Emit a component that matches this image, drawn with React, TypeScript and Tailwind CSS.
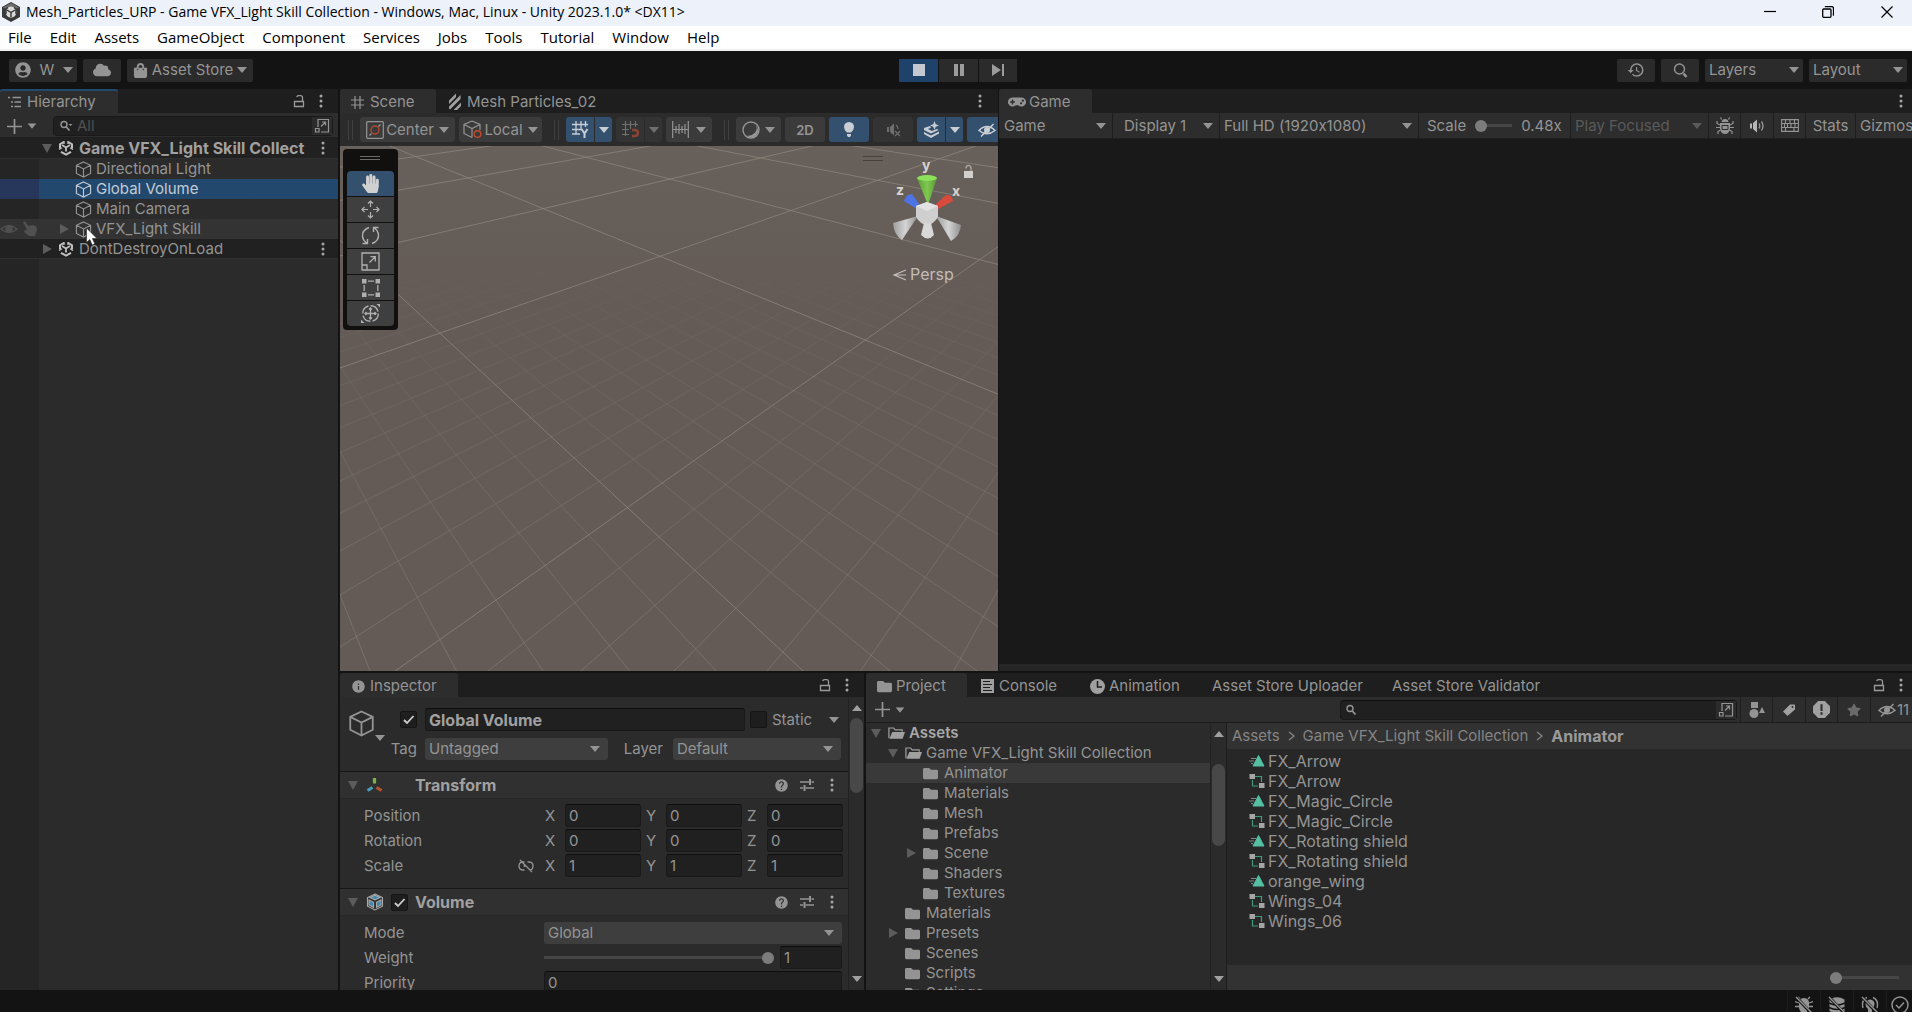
import React from 'react';
import { FaHandPaper, FaCloud, FaGamepad, FaFolder, FaUserCircle, FaStar, FaShoppingBag } from 'react-icons/fa';
import { MdHistory, MdHelp, MdInfo } from 'react-icons/md';

type IconProps = { className?: string };

/* ---------- icons ---------- */

const Svg: React.FC<{ size?: string; box?: string; children: React.ReactNode }> = ({ size = 'size-4', box = '0 0 16 16', children }) => (
  <svg viewBox={box} className={`${size} shrink-0`} fill="none" stroke="currentColor" strokeWidth="1.4" aria-hidden="true">
    {children}
  </svg>
);

const Caret: React.FC<IconProps> = ({ className = '' }) => (
  <svg viewBox="0 0 10 6" className={`w-[10px] h-[6px] shrink-0 fill-current ${className}`} aria-hidden="true">
    <path d="M0 0h10L5 6z" />
  </svg>
);

const Fold: React.FC<{ open?: boolean }> = ({ open }) => (
  <svg viewBox="0 0 12 12" className="size-3 shrink-0 fill-[#5c5c5c]" aria-hidden="true">
    <path d={open ? 'M1 2h10L6 11z' : 'M2 1v10l9-5z'} />
  </svg>
);

const Kebab: React.FC<IconProps> = ({ className = '' }) => (
  <svg viewBox="0 0 4 14" className={`w-1 h-[14px] shrink-0 fill-[#a5a5a5] ${className}`} aria-hidden="true">
    <circle cx="2" cy="2" r="1.5" />
    <circle cx="2" cy="7" r="1.5" />
    <circle cx="2" cy="12" r="1.5" />
  </svg>
);

const Lock = () => (
  <svg viewBox="0 0 12 14" className="w-3 h-[14px] shrink-0" fill="none" stroke="#9a9a9a" strokeWidth="1.3" aria-hidden="true">
    <path d="M1.5 7.5h9v5h-9zM9.5 7V3.5Q9.5 1.6 7.5 1.6H5.5Q4 1.6 3.8 3.2" />
  </svg>
);

const Cube: React.FC<{ size?: string }> = ({ size = 'size-[17px]' }) => (
  <Svg size={size} box="0 0 18 18">
    <path strokeWidth="1.2" d="M9 1l7.5 3.6v8.6L9 17l-7.5-3.8V4.6zM1.5 4.6L9 8.4l7.5-3.8M9 8.4V17" />
  </Svg>
);

const UnityMark = () => (
  <svg viewBox="0 0 16 16" className="size-4 shrink-0" fill="none" stroke="#c0c0c0" strokeWidth="2" aria-hidden="true">
    <path d="M6 1.8L2 4.2v4.3M10 1.8l4 2.4v4.3M3 11.8l5 2.9 5-2.9" />
    <path d="M4 5l4 2.4L12 5M8 7.4v4.2" strokeWidth="1.8" />
    <path d="M6 1v3M10 1v3M1 9.5l3-1.7M15 9.5l-3-1.7" strokeWidth="1.3" />
  </svg>
);

const HierarchyIcon = () => (
  <Svg size="size-[14px]" box="0 0 14 14">
    <path d="M0 2.5h2M4.5 2.5H13M3 7h2M6.5 7H13M3 11.5h2M6.5 11.5H13" />
  </Svg>
);

const GridIcon = () => (
  <Svg size="size-[13px]" box="0 0 13 13">
    <path strokeWidth="1.2" d="M4 0v13M9 0v13M0 4h13M0 9h13" />
  </Svg>
);

const ShaderIcon = () => (
  <svg viewBox="0 0 14 18" className="w-[14px] h-[18px] fill-[#a0a0a0]" aria-hidden="true">
    <path d="M1 7.500L8 .500v3.500L1 11zM1 13.500L12.500 2v4L2 16.500 1 15.500zM5.500 17L13 9.500v3.500l-4 4z" />
  </svg>
);

const OpenFolder = () => (
  <svg viewBox="0 0 18 14" className="w-[17px] h-[14px]" aria-hidden="true">
    <path d="M1 12.500V1.700h5l1.500 2h7.500v2" fill="none" stroke="#a0a0a0" strokeWidth="1.300" />
    <path d="M4.500 6H18l-2.500 7H1.500z" fill="#a0a0a0" />
  </svg>
);

const PopOut: React.FC<{ size?: string }> = ({ size = 'size-4' }) => (
  <Svg size={size}>
    <path strokeWidth="1.2" d="M4 9V1.500h10.500V14H7M1.500 10.500H5V14H1.500zM7 8.500l4.500-4.500M8 4h3.500v3.500" />
  </Svg>
);

const ScaleIcon = () => (
  <Svg size="size-[19px]" box="0 0 19 19">
    <path strokeWidth="1.3" d="M1 1h17v17H1zM1 13h5v5M8.500 10.500L14 5M9.500 4.700H14.300V9.500" />
  </Svg>
);

const SearchIcon: React.FC<{ caret?: boolean }> = ({ caret }) => (
  <Svg size="size-[14px]" box="0 0 14 14">
    <circle cx="5" cy="5.500" r="3" />
    <path strokeWidth="1.800" d="M7.300 8l3.200 3.500" />
    {caret && <path d="M9.500 5h4l-2 2z" fill="currentColor" stroke="none" />}
  </Svg>
);

const Plus = () => (
  <Svg size="size-[17px]" box="0 0 17 17">
    <path strokeWidth="1.700" d="M8.500 1v15M1 8.500h15" />
  </Svg>
);

const HiddenEye = () => (
  <Svg size="size-[18px]" box="0 0 18 18">
    <path strokeWidth="1.500" d="M1 9.500Q9 1.500 17 9.500Q9 16 1 9.500zM3 15.500L15.500 3" />
    <circle cx="9" cy="9" r="3" fill="currentColor" stroke="none" />
  </Svg>
);

const Sliders = () => (
  <Svg size="size-[14px]" box="0 0 14 14">
    <path strokeWidth="1.300" d="M0 4h9M11.500 4H14M0 10h3M5.500 10H14" />
    <path strokeWidth="2" d="M10 1v6M4.500 7v6" />
  </Svg>
);

const SlashMark = () => <path d="M2 2l15 16" stroke="#121212" strokeWidth="3" />;

/* ---------- small building blocks ---------- */

const Tab: React.FC<{ icon?: React.ReactNode; label: string; active?: boolean; focused?: boolean; className: string }> = ({ icon, label, active, focused, className }) => (
  <button
    role="tab"
    aria-selected={!!active}
    className={`h-6 pt-[2px] flex items-center shrink-0 whitespace-nowrap rounded-t-[3px] ${active ? 'bg-[#2d2d2d]' : ''} ${focused ? 'shadow-[inset_0_2px_#24496f] rounded-none' : ''} ${className}`}
  >
    {icon}
    {label}
  </button>
);

const Dropdown: React.FC<{ label: string; value: string; className: string; caretClass?: string }> = ({ label, value, className, caretClass = 'right-2' }) => (
  <div className={`relative flex items-center ${className}`}>
    <select aria-label={label} className="appearance-none size-full bg-transparent pr-5 outline-none" defaultValue={value}>
      <option>{value}</option>
    </select>
    <Caret className={`absolute pointer-events-none ${caretClass}`} />
  </div>
);

const Check: React.FC<{ label: string; checked?: boolean }> = ({ label, checked }) => (
  <span className="relative flex size-[17px] shrink-0">
    <input type="checkbox" id={label} aria-label={label} defaultChecked={checked} className="peer appearance-none size-full rounded-[2px] bg-[#1e1e1e] border border-[#151515]" />
    <svg viewBox="0 0 17 17" className="absolute inset-0 size-full hidden peer-checked:block pointer-events-none" fill="none" stroke="#d0d0d0" strokeWidth="1.800" aria-hidden="true">
      <path d="M4 9l3 3 6.500-7" />
    </svg>
  </span>
);

const Field: React.FC<{ label: string; value: string; className: string }> = ({ label, value, className }) => (
  <input aria-label={label} defaultValue={value} className={`min-w-0 rounded-[3px] bg-[#202020] border border-[#191919] border-t-[#0e0e0e] outline-none ${className}`} />
);

const Slider: React.FC<{ label: string; value: number; className: string }> = ({ label, value, className }) => (
  <input
    type="range"
    aria-label={label}
    defaultValue={value}
    className={`appearance-none h-[3px] bg-[#464646] [&::-webkit-slider-thumb]:appearance-none [&::-webkit-slider-thumb]:size-3 [&::-webkit-slider-thumb]:rounded-full [&::-webkit-slider-thumb]:bg-[#7c7c7c] ${className}`}
  />
);

const ScrollBar: React.FC<{ thumb: string }> = ({ thumb }) => (
  <div className="w-4 shrink-0 flex flex-col items-center justify-between py-2 border-l border-[#222222] text-[#a0a0a0]">
    <Caret className="rotate-180" />
    <div className="flex-1 w-[13px] flex flex-col">
      <div className={`rounded-full bg-[#484848] ${thumb}`} />
    </div>
    <Caret />
  </div>
);

/* ---------- window chrome ---------- */

const menus = ['File', 'Edit', 'Assets', 'GameObject', 'Component', 'Services', 'Jobs', 'Tools', 'Tutorial', 'Window', 'Help'];

const TitleBar = () => (
  <header className="font-['Open_Sans',sans-serif] text-[15px] text-black shrink-0">
    <div className="h-[26px] bg-[#edf1fa] flex items-center pl-[2px] pb-[3px]">
      <svg viewBox="0 0 18 20" className="w-[18px] h-5 mr-[6px]" aria-hidden="true">
        <path d="M9 0l9 5v10l-9 5-9-5V5z" fill="#3a3a3a" />
        <path d="M9 1l8 4.500L9 9 1 5.500z" fill="#6d6d6d" />
        <circle cx="9" cy="10" r="5.500" fill="#d9d9d9" />
        <path d="M5 8l4 2.500L13 8M9 10.500V15M6 5.500l-2 1.500v5M12 5.500l2 1.500v5" fill="none" stroke="#333" strokeWidth="1.400" />
      </svg>
      <h1 className="flex-1 truncate text-[14px]">Mesh_Particles_URP - Game VFX_Light Skill Collection - Windows, Mac, Linux - Unity 2023.1.0* &lt;DX11&gt;</h1>
      <div className="flex">
        <button aria-label="Minimize" className="w-12 h-[23px] flex items-center justify-center">
          <Svg size="size-3" box="0 0 12 12"><path strokeWidth="1.200" d="M0 5.500h12" /></Svg>
        </button>
        <button aria-label="Restore" className="w-[68px] h-[23px] flex items-center justify-center">
          <Svg size="size-3" box="0 0 12 12"><path strokeWidth="1.300" d="M.7 4q0-1 1-1h6.300q1 0 1 1v6.300q0 1-1 1H1.700q-1 0-1-1zM3 1q.5-.4 1-.4h5.500q2 0 2 2V8.500q0 .5-.5 1" /></Svg>
        </button>
        <button aria-label="Close" className="w-[50px] h-[23px] flex items-center justify-center">
          <Svg size="size-3" box="0 0 12 12"><path strokeWidth="1.200" d="M.5.5l11 11M11.500.5l-11 11" /></Svg>
        </button>
      </div>
    </div>
    <nav className="h-[25px] bg-white border-b-2 border-[#f0f0f0] flex items-center pl-2 pb-[2px] gap-[18px]">
      {menus.map((menu) => (
        <button key={menu}>{menu}</button>
      ))}
    </nav>
  </header>
);

const MainToolbar = () => (
  <div className="h-[38px] shrink-0 flex items-center pl-[9px] pr-[5px] [&_button]:h-[23px] [&_button]:bg-[#2b2b2b] [&_button]:flex [&_button]:items-center">
    <div className="flex-1 flex gap-[6px]">
      <button className="w-[68px] justify-between pl-[6px] pr-1 rounded-[2px]"><FaUserCircle size={16} />W<Caret /></button>
      <button aria-label="Cloud" className="w-[38px] justify-center rounded-[2px]"><FaCloud size={18} /></button>
      <button className="w-[126px] justify-between pl-[6px] pr-[6px] rounded-[2px]"><FaShoppingBag size={15} />Asset Store<Caret /></button>
    </div>
    <div className="flex gap-px">
      <button aria-label="Stop" className="w-[39px] justify-center !bg-[#1f426a]">
        <span className="size-3 bg-[#c4c8d0]" />
      </button>
      <button aria-label="Pause" className="w-[39px] justify-center gap-[2px]">
        <span className="w-1 h-3 bg-[#9c9c9c]" /><span className="w-1 h-3 bg-[#9c9c9c]" />
      </button>
      <button aria-label="Step" className="w-[38px] justify-center">
        <svg viewBox="0 0 12 12" className="size-3 fill-[#9c9c9c]" aria-hidden="true"><path d="M0 0l9 6-9 6zM10 0h2v12h-2z" /></svg>
      </button>
    </div>
    <div className="flex-1 flex justify-end gap-[6px]">
      <button aria-label="Undo history" className="w-[38px] justify-center rounded-[2px]"><MdHistory size={18} /></button>
      <button aria-label="Search" className="w-[38px] justify-center rounded-[2px]">
        <Svg size="size-[15px]" box="0 0 15 15"><circle cx="6.500" cy="6" r="5" /><path strokeWidth="2.600" d="M10.500 10.500l3 3.500" /></Svg>
      </button>
      <Dropdown label="Layers" value="Layers" className="w-[98px] h-[23px] bg-[#2b2b2b] rounded-[2px] pl-1" caretClass="right-1" />
      <Dropdown label="Layout" value="Layout" className="w-[98px] h-[23px] bg-[#2b2b2b] rounded-[2px] pl-1" caretClass="right-1" />
    </div>
  </div>
);

/* ---------- hierarchy ---------- */

const objects = [
  { name: 'Directional Light' },
  { name: 'Global Volume', selected: true },
  { name: 'Main Camera' },
  { name: 'VFX_Light Skill', hovered: true },
];

const Hierarchy = () => (
  <section className="relative w-[338px] shrink-0 flex flex-col bg-[#2b2b2b]">
    <div className="h-6 shrink-0 flex items-center bg-[#1e1e1e]" role="tablist">
      <Tab active focused icon={<HierarchyIcon />} label="Hierarchy" className="w-[118px] pl-2 gap-[5px]" />
      <div className="flex-1 flex justify-end items-center gap-[14px] pr-[15px]"><Lock /><Kebab /></div>
    </div>
    <div className="h-[25px] shrink-0 flex items-center pt-[2px] pl-[6px] pr-[5px] bg-[#2d2d2d] border-b border-[#1e1e1e]">
      <button aria-label="Create" className="flex items-center gap-1 w-[47px] shrink-0"><Plus /><Caret className="scale-90" /></button>
      <div className="flex-1 min-w-0 h-5 flex items-center rounded-[4px] border border-[#191919] bg-[#202020] pl-[5px]">
        <SearchIcon caret />
        <input aria-label="Search hierarchy" placeholder="All" className="flex-1 min-w-0 pl-1 bg-transparent outline-none placeholder:text-[#505050]" />
        <button aria-label="Open in search" className="w-5 h-full shrink-0 flex items-center justify-center bg-[#2b2b2b]"><PopOut /></button>
      </div>
    </div>
    <div className="flex-1 bg-linear-to-r from-[#252525] from-[39px] to-[#2b2b2b] to-[39px]">
      <div className="h-[21px] flex items-center bg-[#212121] pl-[41px] pr-[13px] border-b border-[#2f2f2f] font-bold text-base text-[#a0a0a0]">
        <Fold open />
        <span className="ml-[5px] mr-[5px]"><UnityMark /></span>
        <span className="flex-1 whitespace-nowrap">Game VFX_Light Skill Collect</span>
        <Kebab />
      </div>
      <ul>
        {objects.map((o) => (
          <li key={o.name} className={`h-5 flex items-center ${o.selected ? 'bg-linear-to-r from-[#27375c] from-[39px] to-[#22486d] to-[39px] text-[#c2ccd6]' : ''} ${o.hovered ? 'bg-[#333333]' : ''}`}>
            <span className="w-[58px] flex items-center gap-1 text-[#505050]">
              {o.hovered && (
                <>
                  <Svg size="size-[18px]" box="0 0 18 18">
                    <path d="M1 9Q9 2 17 9Q9 16 1 9z" />
                    <circle cx="9" cy="9" r="3" fill="currentColor" />
                  </Svg>
                  <svg viewBox="0 0 16 16" className="size-4 fill-current" aria-hidden="true">
                    <path d="M1 1l2-.5 4 5 1-1.500 2 .5 1.500-.500 1 1h1.500l1 3-1 4-1 3H7l-5-4 .500-1.500L5 9z" />
                  </svg>
                </>
              )}
            </span>
            <span className="w-[17px] shrink-0">{o.hovered && <Fold />}</span>
            <Cube />
            <span className="ml-1">{o.name}</span>
          </li>
        ))}
      </ul>
      <div className="h-5 flex items-center bg-[#212121] pl-[41px] pr-[13px] border-b border-[#2f2f2f]">
        <Fold />
        <span className="ml-[5px] mr-[5px]"><UnityMark /></span>
        <span className="flex-1">DontDestroyOnLoad</span>
        <Kebab />
      </div>
    </div>
    <svg viewBox="0 0 12 20" className="absolute left-[86px] top-[138px] w-3 h-5" aria-hidden="true">
      <path d="M.5 1v14.500l3.300-3 2.400 5.500 2.600-1.200-2.400-5.300h4.600z" fill="#fff" stroke="#222" strokeWidth=".6" />
    </svg>
  </section>
);

/* ---------- scene ---------- */

// ground plane -> screen, one unit is a major grid cell
const depth = (u: number, v: number) => 1 + 0.5428 * u + 0.5867 * v;
const project = (u: number, v: number) => {
  const w = depth(u, v);
  return [(523.1 * u - 129 * v + 287.35) / w, (-62.2 * u - 64.6 * v + 361.5) / w].map((n) => n.toFixed(1)).join(' ');
};

const NEAR = 0.35;
const FAR = 12;

const gridPath = (step: number, count: number, skip?: number) => {
  const parts: string[] = [];
  for (let i = -count; i <= count; i++) {
    if (skip && i % skip === 0) continue;
    const k = i * step;
    const v0 = (NEAR - 1 - 0.5428 * k) / 0.5867;
    const u0 = (NEAR - 1 - 0.5867 * k) / 0.5428;
    parts.push(`M${project(k, v0)}L${project(k, v0 + FAR)}`);
    parts.push(`M${project(u0, k)}L${project(u0 + FAR, k)}`);
  }
  return parts.join('');
};

const SceneGrid = () => (
  <svg viewBox="0 0 658 525" preserveAspectRatio="xMinYMin slice" className="size-full block" fill="none" aria-label="Scene view">
    <defs>
      <linearGradient id="minorFade" gradientUnits="userSpaceOnUse" x1="0" y1="110" x2="0" y2="525">
        <stop offset="0" stopColor="#8d857e" stopOpacity="0" />
        <stop offset="0.35" stopColor="#8d857e" stopOpacity="0.22" />
        <stop offset="1" stopColor="#8d857e" stopOpacity="0.5" />
      </linearGradient>
    </defs>
    <path d={gridPath(0.1, 35, 10)} stroke="url(#minorFade)" />
    <path d={gridPath(1, 6)} stroke="#8d857e" strokeOpacity="0.75" />
  </svg>
);

const Gizmo = () => (
  <svg viewBox="0 -8 100 138" className="absolute right-[19px] top-[5px] w-[100px] h-[138px]" aria-hidden="true">
    <defs>
      <linearGradient id="coneGrey"><stop offset="0" stopColor="#9c9c9c" /><stop offset=".5" stopColor="#d4d4d4" /><stop offset="1" stopColor="#8e8e8e" /></linearGradient>
      <linearGradient id="coneGreen"><stop offset="0" stopColor="#5d9c35" /><stop offset=".5" stopColor="#7ec850" /><stop offset="1" stopColor="#5b9635" /></linearGradient>
    </defs>
    <path d="M14 64l25-7-16 24q-8-5-9-17z" fill="url(#coneGrey)" />
    <path d="M82 66l-25-9 15 25q9-5 10-16z" fill="url(#coneGrey)" />
    <path d="M25 42q2-7 8-7l7 10-2 5z" fill="#4d74e6" />
    <path d="M74 42q-1-7-7-6l-10 9 2 5z" fill="#d94a3c" />
    <path d="M38 19h20L49 46z" fill="url(#coneGreen)" />
    <ellipse cx="48" cy="19" rx="10" ry="3" fill="#8be05c" />
    <path d="M48 43l11 4v11q-4 7-11 8-7-1-11-8V47z" fill="#cfcfcf" />
    <path d="M48 43l11 4-11 5-11-5z" fill="#e2e2e2" />
    <path d="M45 64h7l3 12q-6 7-13 0z" fill="#d8d8d8" />
    <g fill="#d5d2d0" className="text-[14px] font-bold">
      <text x="43" y="11">y</text>
      <text x="17" y="36">z</text>
      <text x="73" y="37">x</text>
    </g>
    <path d="M85 12h9v7h-9z" fill="#d3cfcc" />
    <path d="M87 9.500q0-3 2.500-3t2.500 3V12" fill="none" stroke="#a8a29e" strokeWidth="1.400" />
    <path d="M27 111l-12 5 12 5M15 116h12" fill="none" stroke="#c2bdb9" strokeWidth="1.200" />
    <text x="31" y="121" fill="#c2bdb9" className="text-[16px]">Persp</text>
  </svg>
);

const DragHandle: React.FC<IconProps> = ({ className = '' }) => <span className={`w-[5px] h-5 border-x border-[#404040] shrink-0 ${className}`} />;

const btn = 'h-[25px] shrink-0 flex items-center justify-center bg-[#3b3b3b]';
const btnOn = 'h-[25px] shrink-0 flex items-center justify-center bg-[#34506f] text-[#c9ced4]';

const SceneToolbar = () => (
  <div className="h-[33px] shrink-0 flex items-center gap-[7px] pl-2 bg-[#2b2b2b] overflow-hidden">
    <DragHandle />
    <div className="flex gap-1">
      <button className={`${btn} w-[95px] rounded-[3px] gap-[2px] px-[5px]`}>
        <Svg size="size-[18px]" box="0 0 18 18">
          <rect x=".7" y=".7" width="16.600" height="16.600" rx="1" strokeWidth="1.200" />
          <circle cx="9" cy="9" r="4" stroke="#b5492d" />
          <path d="M3.500 14.500l2-2M12.500 5.500l2-2" />
        </Svg>
        Center
        <Caret className="ml-[3px]" />
      </button>
      <button className={`${btn} w-[83px] rounded-[3px] gap-[2px] px-[5px]`}>
        <Svg size="size-[19px]" box="0 0 19 19">
          <path strokeWidth="1.200" d="M9 1l8 3.500V10M9 1L1 4.500v9L9 17.500M1 4.500L9 8.500l8-4M9 8.500v9" />
          <circle cx="14.500" cy="14" r="3.300" stroke="#c04a2c" />
        </Svg>
        Local
        <Caret className="ml-[3px]" />
      </button>
    </div>
    <DragHandle className="ml-[5px]" />
    <div className="flex gap-1">
      <div className="flex gap-px">
        <button aria-label="Grid visibility" className={`${btnOn} w-7 rounded-l-[3px]`}>
          <Svg size="size-[17px]" box="0 0 17 17">
            <path d="M4 0v13M9 0v8M13.500 0v6M0 3.500h16M0 8.500h9M0 13h8" strokeWidth="1.300" />
            <path d="M9.500 8l3 4.500 3-4.500M12.500 12v5" strokeWidth="2" />
          </Svg>
        </button>
        <button aria-label="Grid options" className={`${btnOn} w-[17px] rounded-r-[3px]`}><Caret /></button>
      </div>
      <div className="flex gap-px text-[#6f6f6f]">
        <button aria-label="Grid snapping" className={`${btn} w-7 rounded-l-[3px] !bg-[#333333]`}>
          <Svg size="size-[17px]" box="0 0 17 17">
            <path d="M3.500 0v15M8.500 0v8M13.500 0v6M0 3.500h16M0 8.500h7M0 13.500h7" strokeWidth="1.200" />
            <path d="M10 9h3q3 .3 3 3t-3 3h-3" stroke="#8a4433" strokeWidth="2.600" />
          </Svg>
        </button>
        <button aria-label="Snapping options" className={`${btn} w-[17px] rounded-r-[3px] !bg-[#333333]`}><Caret /></button>
      </div>
      <button aria-label="Snap increment" className={`${btn} w-[46px] rounded-[3px] gap-[7px]`}>
        <Svg size="size-[17px]" box="0 0 17 17"><path strokeWidth="1.200" d="M.7 0v17M16.300 0v17M.7 8.500h16M4 5v7M7 3v10M10 5v7M13 3v10" /></Svg>
        <Caret />
      </button>
    </div>
    <DragHandle className="ml-[5px]" />
    <div className="flex gap-1">
      <button aria-label="Draw mode" className={`${btn} w-[45px] rounded-[3px] gap-[5px]`}>
        <Svg size="size-[18px]" box="0 0 18 18">
          <circle cx="9" cy="9" r="8" />
          <path d="M13 2.500Q17 8 12 12.500Q8 15.500 4.500 14.500Q9 18.500 14 15Q19 9.500 13 2.500z" fill="currentColor" stroke="none" />
        </Svg>
        <Caret />
      </button>
      <button className={`${btn} w-10 rounded-[3px] text-[13px] font-semibold`}>2D</button>
      <button aria-label="Scene lighting" className={`${btnOn} w-10 rounded-[3px]`}>
        <svg viewBox="0 0 12 16" className="w-3 h-4 fill-current" aria-hidden="true"><path d="M6 0q5 .3 5 5 0 3-3 5.500H4Q1 8 1 5 1 .3 6 0zM4 12h4v1.500L7 15H5l-1-1.500z" /></svg>
      </button>
      <button aria-label="Scene audio" className={`${btn} w-10 rounded-[3px] !bg-[#333333] text-[#6f6f6f]`}>
        <Svg size="size-[15px]" box="0 0 15 15">
          <path d="M1 5h2v5H1zM4 5l4-3.500v12L4 10z" fill="currentColor" stroke="none" />
          <path d="M10 3q2 1.500 2 4M9 9l5 5M14 9l-5 5" strokeWidth="1.200" />
        </Svg>
      </button>
      <div className="flex gap-px">
        <button aria-label="Effects" className={`${btnOn} w-7 rounded-l-[3px]`}>
          <svg viewBox="0 0 17 17" className="size-[17px] fill-current" aria-hidden="true">
            <path d="M11.500 0l1.200 3.300L16 4.500l-3.300 1.200L11.500 9l-1.200-3.300L7 4.500l3.300-1.200zM1 7l6-2 1 1.500L5 8l4 2 5-2 1.500 1L8 12.500 1 9zM1 11l7 3.500 8-4v2L8 17 1 13z" />
          </svg>
        </button>
        <button aria-label="Effects options" className={`${btnOn} w-[17px] rounded-r-[3px]`}><Caret /></button>
      </div>
      <button aria-label="Hidden objects" className={`${btnOn} w-10 rounded-[3px]`}><HiddenEye /></button>
    </div>
  </div>
);

const tools = [
  { name: 'View', icon: <FaHandPaper size={19} /> },
  {
    name: 'Move',
    icon: <Svg size="size-[19px]" box="0 0 19 19"><path strokeWidth="1.200" d="M9.500 7V1M7 3.500L9.500 1 12 3.500M9.500 12v6M7 15.500L9.500 18l2.500-2.500M7 9.500H1M3.500 7L1 9.500 3.500 12M12 9.500h6M15.500 7L18 9.500 15.500 12" /></Svg>,
  },
  {
    name: 'Rotate',
    icon: <Svg size="size-[19px]" box="0 0 19 19"><path strokeWidth="1.400" d="M8 1.500Q1 4 1.500 10.500Q2 14.500 6 17.500M1.500 17.500h5V13M11 17.500q7-2.500 6.500-9Q17 4.500 13 1.500M17.500 1.500h-5V6" /></Svg>,
  },
  { name: 'Scale', icon: <ScaleIcon /> },
  {
    name: 'Rect',
    icon: (
      <Svg size="size-[18px]" box="0 0 18 18">
        <path d="M6 2.200h6M6 15.800h6M2.200 6v6M15.800 6v6" strokeWidth="1.300" />
        <path d="M0 0h4.500v4.500H0zM13.500 0H18v4.500h-4.500zM0 13.500h4.500V18H0zM13.500 13.500H18V18h-4.500z" fill="currentColor" stroke="none" />
      </Svg>
    ),
  },
  {
    name: 'Transform',
    icon: (
      <Svg size="size-[19px]" box="0 0 19 19">
        <circle cx="9.500" cy="9.500" r="7.800" strokeDasharray="10 2.200" />
        <path strokeWidth="1.300" d="M9.500 4v11M4 9.500h11M8 5.500L9.500 4 11 5.500M8 13.500L9.500 15l1.500-1.500M5.500 8L4 9.500 5.500 11M13.500 8L15 9.500 13.500 11" />
        <path d="M15.500 0H19v3.500zM0 15.500V19h3.500z" fill="currentColor" stroke="none" />
      </Svg>
    ),
  },
];

const Scene = () => (
  <section className="w-[658px] shrink-0 flex flex-col bg-[#1e1e1e]">
    <div className="h-6 shrink-0 flex items-center" role="tablist">
      <Tab active icon={<GridIcon />} label="Scene" className="w-24 pl-[11px] gap-[6px]" />
      <Tab icon={<ShaderIcon />} label="Mesh Particles_02" className="pl-3 gap-[5px]" />
      <div className="flex-1 flex justify-end pr-4"><Kebab /></div>
    </div>
    <SceneToolbar />
    <div className="relative flex-1 min-h-0 overflow-hidden bg-linear-to-b from-[#68605a] to-[#645b56] to-30%">
      <SceneGrid />
      <div className="absolute left-[3px] top-[3px] w-[55px] p-1 pt-[22px] rounded-[4px] bg-[#12100f] flex flex-col gap-px text-[#b0b0b0]">
        <span className="absolute left-[17px] top-[7px] w-5 h-1 border-y border-[#6b6866]" />
        {tools.map((t, i) => (
          <button key={t.name} aria-label={t.name} className={`h-[25px] flex items-center justify-center first-of-type:rounded-t-[4px] last-of-type:rounded-b-[4px] ${i === 0 ? 'bg-[#34506f] text-[#d0d0d0]' : 'bg-[#3e3f3e]'}`}>
            {t.icon}
          </button>
        ))}
      </div>
      <span className="absolute right-[115px] top-[10px] w-5 h-[5px] border-y border-[#45403c]" />
      <Gizmo />
    </div>
  </section>
);

/* ---------- game ---------- */

const Game = () => (
  <section className="flex-1 min-w-0 flex flex-col bg-[#191919] overflow-hidden">
    <div className="h-6 shrink-0 flex items-center bg-[#1e1e1e]" role="tablist">
      <Tab active icon={<FaGamepad size={18} />} label="Game" className="w-[93px] pl-[9px] gap-[3px]" />
      <div className="flex-1 flex justify-end pr-[9px]"><Kebab /></div>
    </div>
    <div className="h-[26px] shrink-0 flex gap-px bg-[#1e1e1e] border-b border-[#1e1e1e] whitespace-nowrap *:bg-[#2d2d2d] *:shrink-0">
      <Dropdown label="View" value="Game" className="w-[113px] pl-[5px]" caretClass="right-[6px]" />
      <Dropdown label="Display" value="Display 1" className="w-[106px] pl-[11px]" caretClass="right-[6px]" />
      <Dropdown label="Resolution" value="Full HD (1920x1080)" className="w-[198px] pl-1" caretClass="right-[6px]" />
      <label className="w-[151px] flex items-center gap-[9px] pl-2">
        Scale
        <Slider label="Scale" value={0} className="w-[37px]" />
        0.48x
      </label>
      <Dropdown label="Focus mode" value="Play Focused" className="w-[137px] pl-1 text-[#5a5a5a]" caretClass="right-[6px]" />
      <button aria-label="Frame debugger" className="w-[31px] flex items-center justify-center">
        <Svg size="size-[18px]" box="0 0 18 18">
          <path d="M5.500 5Q6 2 9 2t3.500 3zM4 6h10v6q-1 5-5 5t-5-5z" fill="currentColor" stroke="none" />
          <path strokeWidth="1.200" d="M5.500 2.500L4.500.5M12.500 2.500l1-2M4 8L1 6.500V4M14 8l3-1.500V4M4 10.500H0M14 10.500h4M4.500 13L2 14.500V17M13.500 13l2.500 1.500V17" />
          <path d="M6 8.500h6v4H6z" stroke="#2d2d2d" strokeWidth="1" />
        </Svg>
      </button>
      <button aria-label="Mute audio" className="w-8 flex items-center justify-center">
        <Svg size="size-4">
          <path d="M1 5.500h2v5H1zM4 5l4-3.500v13L4 11z" fill="#b5b5b5" stroke="none" />
          <path strokeWidth="1.400" d="M10 5.500q1.500 2.500 0 5M12.500 3.500q3 4.500 0 9" />
        </Svg>
      </button>
      <button aria-label="Shortcuts" className="w-[31px] flex items-center justify-center">
        <Svg size="w-[18px] h-[13px]" box="0 0 18 13">
          <path strokeWidth="1.100" d="M.6.6h16.800v11.800H.6zM.6 4.500h16.800M.6 8.500h16.800M4.500.6v4M9 .6v4M13.500.6v4M3.500 4.500v4M6.500 4.500v4M10 4.500v4M14 4.500v4M4.500 8.500v4M13 8.500v4" />
        </Svg>
      </button>
      <button className="w-[49px]">Stats</button>
      <button className="w-[70px] text-left pl-1">Gizmos</button>
    </div>
    <div className="flex-1" />
    <div className="h-[7px] bg-[#262626]" />
  </section>
);

/* ---------- inspector ---------- */

const vectors = [
  { name: 'Position', value: '0' },
  { name: 'Rotation', value: '0' },
  { name: 'Scale', value: '1' },
];

const ComponentHeader: React.FC<{ title: string; children: React.ReactNode }> = ({ title, children }) => (
  <div className="h-7 flex items-center bg-[#303030] border-t border-b border-t-[#171717] border-b-[#272727] pl-[7px] pr-[14px]">
    <Fold open />
    <div className="w-[56px] pl-[7px] flex items-center gap-2">{children}</div>
    <h2 className="flex-1 font-bold text-base text-[#a0a0a0]">{title}</h2>
    <div className="flex items-center gap-[11px]">
      <MdHelp size={15} />
      <Sliders />
      <Kebab className="ml-[5px]" />
    </div>
  </div>
);

const Inspector = () => (
  <section className="w-[524px] shrink-0 flex flex-col bg-[#2b2b2b] overflow-hidden">
    <div className="h-6 shrink-0 flex items-center bg-[#1e1e1e]" role="tablist">
      <Tab active icon={<MdInfo size={15} />} label="Inspector" className="w-[118px] pl-[11px] gap-1" />
      <div className="flex-1 flex justify-end items-center gap-[14px] pr-[15px]"><Lock /><Kebab /></div>
    </div>
    <div className="flex-1 min-h-0 flex">
      <div className="flex-1 min-w-0 h-[293px] overflow-hidden">
        <div className="h-[74px] flex pt-[11px] pl-2">
          <button aria-label="Object icon" className="w-[35px] shrink-0 flex items-start pt-[2px]">
            <Cube size="size-[27px]" />
            <Caret className="mt-[25px]" />
          </button>
          <div className="flex-1 flex flex-col gap-[7px]">
            <div className="h-[23px] flex items-center pl-[17px]">
              <Check label="Active" checked />
              <Field label="Name" value="Global Volume" className="w-[320px] h-[23px] ml-2 px-[3px] font-bold text-base text-[#a0a0a0]" />
              <span className="w-[5px]" />
              <Check label="Static" />
              <label htmlFor="Static" className="ml-[5px] flex-1">Static</label>
              <Caret className="mr-[9px]" />
            </div>
            <div className="h-[22px] flex items-center">
              <span className="w-[34px] text-right mr-2">Tag</span>
              <Dropdown label="Tag" value="Untagged" className="w-[183px] h-[22px] rounded-[3px] bg-[#3e3e3e] pl-1" />
              <span className="w-[65px] text-right pr-[10px]">Layer</span>
              <Dropdown label="Layer" value="Default" className="w-[168px] h-[22px] rounded-[3px] bg-[#3e3e3e] pl-1" />
            </div>
          </div>
        </div>
        <ComponentHeader title="Transform">
          <svg viewBox="0 0 17 16" className="w-[17px] h-4" fill="none" strokeWidth="3.200" aria-hidden="true">
            <path d="M8.500 1v5.500" stroke="#7cb342" />
            <path d="M6.500 10.500L1.500 13.500" stroke="#4b9cb8" />
            <path d="M10.500 10.500l5 3" stroke="#b5532f" />
          </svg>
        </ComponentHeader>
        <div className="flex flex-col gap-[2px] pt-[5px] pb-[11px] pl-6 pr-[5px]">
          {vectors.map((v) => (
            <div key={v.name} className="h-[23px] flex items-center">
              <span className="flex-1">{v.name}</span>
              {v.name === 'Scale' && (
                <span className="mr-[11px]">
                  <Svg size="size-4"><path strokeWidth="1.300" d="M6.500 4H4.500Q1 4.500 1 8t3.500 4h2M9.500 4h2Q15 4.500 15 8t-3 4M5.500 8h2M2 2l12 12" /></Svg>
                </span>
              )}
              {['X', 'Y', 'Z'].map((axis, i) => (
                <label key={axis} className={`flex items-center justify-between w-[96px] ${i ? 'ml-[5px]' : ''}`}>
                  {axis}
                  <Field label={`${v.name} ${axis}`} value={v.value} className="w-[76px] h-[23px] px-[3px]" />
                </label>
              ))}
            </div>
          ))}
        </div>
        <ComponentHeader title="Volume">
          <svg viewBox="0 0 18 18" className="size-[18px] -mr-px shrink-0" fill="none" stroke="#a8a8a8" strokeWidth="1.100" aria-hidden="true">
            <path d="M9 1l7.500 3.600v8.600L9 17l-7.500-3.800V4.600z" />
            <path d="M4 4.500l5-2.300 5 2.300-5 2.300zM3 7l4.500 2.300v5L3 12zM15 7l-4.500 2.300v5L15 12z" fill="#3f87ac" />
          </svg>
          <Check label="Volume enabled" checked />
        </ComponentHeader>
        <div className="flex flex-col gap-[2px] pt-[5px] pl-6 pr-[6px]">
          <div className="h-[23px] flex items-center">
            <span className="flex-1">Mode</span>
            <Dropdown label="Mode" value="Global" className="w-[298px] h-[22px] rounded-[3px] bg-[#3e3e3e] pl-1" />
          </div>
          <div className="h-[23px] flex items-center">
            <span className="flex-1">Weight</span>
            <Slider label="Weight" value={100} className="w-[230px] mr-[6px]" />
            <Field label="Weight value" value="1" className="w-[62px] h-[23px] px-[3px]" />
          </div>
          <label className="h-[23px] flex items-center">
            <span className="flex-1">Priority</span>
            <Field label="Priority" value="0" className="w-[298px] h-[23px] px-[3px]" />
          </label>
        </div>
      </div>
      <ScrollBar thumb="h-[75px] mt-[7px]" />
    </div>
  </section>
);

/* ---------- project ---------- */

const indents = ['pl-1', 'pl-[21px]', 'pl-[39px]'];

const folders = [
  { name: 'Assets', level: 0, open: true, bold: true },
  { name: 'Game VFX_Light Skill Collection', level: 1, open: true },
  { name: 'Animator', level: 2, active: true },
  { name: 'Materials', level: 2 },
  { name: 'Mesh', level: 2 },
  { name: 'Prefabs', level: 2 },
  { name: 'Scene', level: 2, closed: true },
  { name: 'Shaders', level: 2 },
  { name: 'Textures', level: 2 },
  { name: 'Materials', level: 1 },
  { name: 'Presets', level: 1, closed: true },
  { name: 'Scenes', level: 1 },
  { name: 'Scripts', level: 1 },
  { name: 'Settings', level: 1 },
];

const assets = [
  { name: 'FX_Arrow', clip: true },
  { name: 'FX_Arrow' },
  { name: 'FX_Magic_Circle', clip: true },
  { name: 'FX_Magic_Circle' },
  { name: 'FX_Rotating shield', clip: true },
  { name: 'FX_Rotating shield' },
  { name: 'orange_wing', clip: true },
  { name: 'Wings_04' },
  { name: 'Wings_06' },
];

const ClipIcon = () => (
  <svg viewBox="0 0 16 16" className="size-4 shrink-0" aria-hidden="true">
    <path d="M9.500 2.500L15 13H4z" fill="#54bfa3" stroke="#54bfa3" strokeLinejoin="round" />
    <path d="M2 5.500h5M0 8h5M2 10.500h2" stroke="#7d8b86" strokeWidth="1.200" />
  </svg>
);

const ControllerIcon = () => (
  <svg viewBox="0 0 16 16" className="size-4 shrink-0" aria-hidden="true">
    <path d="M6 3.500h6.500V9M3.500 7v6H9" fill="none" stroke="#3f9a80" strokeWidth="1.200" />
    <path d="M.5 1h5.500v5H.5zM10 10h5.500v5H10z" fill="#a5a5a5" />
  </svg>
);

const Project = () => (
  <section className="flex-1 min-w-0 flex flex-col bg-[#2b2b2b] overflow-hidden">
    <div className="h-6 shrink-0 flex items-center bg-[#1e1e1e]" role="tablist">
      <Tab active icon={<FaFolder size={15} />} label="Project" className="w-[101px] pl-[11px] gap-1" />
      <Tab
        icon={
          <svg viewBox="0 0 13 14" className="w-[13px] h-[14px]" aria-hidden="true">
            <path d="M0 0h13v14H0z" fill="#a0a0a0" />
            <path d="M2 2.500h7M2 5.500h9M2 8.500h7M2 11.500h9" stroke="#1e1e1e" strokeWidth="1.200" />
          </svg>
        }
        label="Console"
        className="w-[109px] pl-[14px] gap-[5px]"
      />
      <Tab
        icon={
          <svg viewBox="0 0 15 15" className="size-[15px]" aria-hidden="true">
            <circle cx="7.500" cy="7.500" r="7.500" fill="#a0a0a0" />
            <path d="M7.500 2v6h4.500" fill="none" stroke="#1e1e1e" strokeWidth="1.500" />
          </svg>
        }
        label="Animation"
        className="w-[123px] pl-[14px] gap-1"
      />
      <Tab label="Asset Store Uploader" className="w-[180px] pl-[13px]" />
      <Tab label="Asset Store Validator" className="pl-[13px]" />
      <div className="flex-1 flex justify-end items-center gap-[14px] pr-[9px]"><Lock /><Kebab /></div>
    </div>
    <div className="h-[26px] shrink-0 flex items-center pl-2 bg-[#2d2d2d] border-b border-[#1c1c1c]">
      <button aria-label="Create asset" className="flex items-center gap-1"><Plus /><Caret className="scale-90" /></button>
      <div className="flex-1" />
      <div className="w-[397px] h-5 flex items-center rounded-[4px] border border-[#191919] border-t-[#0e0e0e] bg-[#202020] pl-1 mr-[3px]">
        <SearchIcon />
        <input aria-label="Search project" className="flex-1 min-w-0 bg-transparent outline-none" />
        <button aria-label="Open project search" className="w-5 h-full shrink-0 flex items-center justify-center bg-[#2b2b2b]"><PopOut /></button>
      </div>
      <div className="flex h-full *:flex *:items-center *:justify-center *:border-l *:border-[#1e1e1e]">
        <button aria-label="Filter by type" className="w-8">
          <svg viewBox="0 0 16 16" className="size-4 fill-current" aria-hidden="true">
            <path d="M2 0h7v6H2zM10 11l3-6 3 6z" /><circle cx="5" cy="11.500" r="4.500" />
          </svg>
        </button>
        <button aria-label="Filter by label" className="w-[33px]">
          <svg viewBox="0 0 14 14" className="size-[14px]" aria-hidden="true">
            <path d="M8 1.500h4.500l.5.500v4.500L5.500 13 1 8.500z" fill="#a0a0a0" /><circle cx="10.500" cy="4" r="1" fill="#2d2d2d" />
          </svg>
        </button>
        <button aria-label="Filter by import log" className="w-8">
          <svg viewBox="0 0 18 18" className="size-[17px]" aria-hidden="true">
            <path d="M5.500 0h7L18 5.500v7L12.500 18h-7L0 12.500v-7z" fill="#a0a0a0" />
            <path d="M9 3.500v7M9 12v2.500" stroke="#2d2d2d" strokeWidth="2.200" />
          </svg>
        </button>
        <button aria-label="Favorites" className="w-[33px] text-[#6a6a6a]"><FaStar size={14} /></button>
        <button aria-label="Hidden packages" className="w-[42px] whitespace-nowrap pl-1 gap-px"><HiddenEye />11</button>
      </div>
    </div>
    <div className="flex-1 min-h-0 flex">
      <div className="w-[344px] shrink-0 h-[267px] overflow-hidden">
        <ul>
          {folders.map((f, i) => (
            <li key={i} className={`h-5 flex items-center ${indents[f.level]} ${f.active ? 'bg-[#393939]' : ''}`}>
              <span className="w-[18px]">{(f.open || f.closed) && <Fold open={f.open} />}</span>
              <span className="w-[21px]">{f.open ? <OpenFolder /> : <FaFolder size={15} />}</span>
              <span className={f.bold ? 'font-semibold text-[#a8a8a8]' : ''}>{f.name}</span>
            </li>
          ))}
        </ul>
      </div>
      <ScrollBar thumb="h-[82px] mt-[27px]" />
      <div className="flex-1 min-w-0 flex flex-col bg-[#272727] border-l border-[#1c1c1c]">
        <nav className="h-[26px] shrink-0 flex items-center bg-[#323232] pl-[5px] gap-2 text-[#858585]">
          <a href="#">Assets</a>
          <Svg size="w-[7px] h-[10px]" box="0 0 7 10"><path d="M1 1l5 4-5 4" /></Svg>
          <a href="#">Game VFX_Light Skill Collection</a>
          <Svg size="w-[7px] h-[10px]" box="0 0 7 10"><path d="M1 1l5 4-5 4" /></Svg>
          <a href="#" className="font-bold text-base text-[#9a9a9a]">Animator</a>
        </nav>
        <ul className="flex-1 min-h-0 overflow-hidden pt-[2px] text-base leading-5">
          {assets.map((a, i) => (
            <li key={i} className="h-5 flex items-center gap-[3px] pl-[22px]">
              {a.clip ? <ClipIcon /> : <ControllerIcon />}
              {a.name}
            </li>
          ))}
        </ul>
        <div className="h-[25px] shrink-0 flex items-center justify-end pr-[13px] bg-[#323232]">
          <Slider label="Icon size" value={0} className="w-[69px]" />
        </div>
      </div>
    </div>
  </section>
);

/* ---------- status bar ---------- */

const StatusBar = () => (
  <footer className="h-[22px] shrink-0 flex justify-end overflow-hidden *:w-[33px] *:last:w-[26px] *:h-[30px] *:flex *:items-center *:justify-center *:border-l *:border-[#1d1d1d]">
    <button aria-label="Debugger">
      <Svg size="size-[18px]" box="0 0 18 18">
        <path d="M4 6Q5 2 9 2t5 4v6q-1 5-5 5t-5-5z" fill="currentColor" stroke="none" />
        <path strokeWidth="1.300" d="M5 3L3 1M13 3l2-2M4 7L0 5.500M14 7l4-1.500M4 10.500H0M14 10.500h4" />
        <SlashMark />
        <path d="M1 1l16 16" />
      </Svg>
    </button>
    <button aria-label="Cache server">
      <Svg size="size-[18px]" box="0 0 18 18">
        <path d="M1.500 3.500Q9-1 16.500 3.500V15Q9 19.500 1.500 15z" fill="currentColor" stroke="none" />
        <path d="M1 7q8 4 16 0M1 11.500q8 4 16 0" stroke="#121212" strokeWidth="1.500" />
        <SlashMark />
        <path d="M1 1l16 16" />
      </Svg>
    </button>
    <button aria-label="Auto lighting">
      <Svg size="size-[18px]" box="0 0 18 18">
        <path d="M9 3.500q4.500.5 4.500 4.500 0 3-2.500 5v3H7v-3Q4.500 11 4.500 8 4.500 4 9 3.500z" fill="currentColor" stroke="none" />
        <path d="M2 12Q0 4 6 1.500M12 1.500Q18 4 16 12" />
        <SlashMark />
        <path d="M1 1l16 16" />
      </Svg>
    </button>
    <button aria-label="Background tasks">
      <Svg size="size-[18px]" box="0 0 18 18">
        <circle cx="9" cy="9" r="8" />
        <path d="M5 9l3 3 5-5.500" />
      </Svg>
    </button>
  </footer>
);

export default function App() {
  return (
    <div className="h-screen flex flex-col overflow-hidden bg-[#131313] text-[#949494] font-['Inter',sans-serif] [font-feature-settings:'calt'_0] text-[15px] leading-5">
      <TitleBar />
      <MainToolbar />
      <main className="flex-1 min-h-0 flex gap-[2px]">
        <Hierarchy />
        <div className="flex-1 min-w-0 flex flex-col gap-[2px]">
          <div className="flex-1 min-h-0 flex gap-px">
            <Scene />
            <Game />
          </div>
          <div className="h-[317px] shrink-0 flex gap-[2px]">
            <Inspector />
            <Project />
          </div>
        </div>
      </main>
      <StatusBar />
    </div>
  );
}
